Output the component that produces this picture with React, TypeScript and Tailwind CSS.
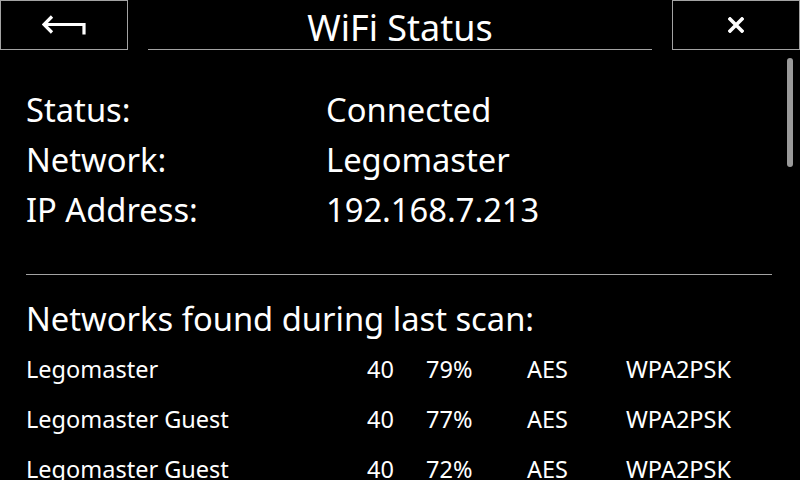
import React from "react";

const rows = [
  ["Legomaster", "40", "79%", "AES", "WPA2PSK"],
  ["Legomaster Guest", "40", "77%", "AES", "WPA2PSK"],
  ["Legomaster Guest", "40", "72%", "AES", "WPA2PSK"],
];

export default function App() {
  return (
    <div
      className="relative w-[800px] h-[480px] overflow-hidden bg-black text-white"
      style={{ fontFamily: '"Noto Sans", "Open Sans", sans-serif' }}
    >
      <div className="flex h-[50px]">
        <div className="w-[128px] h-[50px] border border-[#a3a3a3] flex items-center justify-center">
          <svg width="44" height="20" viewBox="0 0 44 20" fill="none">
            <path d="M10 1.5 L2 9.5 L10 17.5" stroke="white" strokeWidth="3.2" strokeLinejoin="miter" />
            <path d="M2.5 9.5 H42 V19.5" stroke="white" strokeWidth="3.2" />
          </svg>
        </div>
        <div className="flex-1 mx-[20px] h-[50px] border-b border-[#a3a3a3] text-center text-[36px] leading-[50px] pt-[3px]">
          WiFi Status
        </div>
        <div className="w-[128px] h-[50px] border border-[#a3a3a3] flex items-center justify-center">
          <svg width="16" height="16" viewBox="0 0 16 16" fill="none">
            <path d="M2 2 L14 14 M14 2 L2 14" stroke="white" strokeWidth="3.6" strokeLinecap="square" />
          </svg>
        </div>
      </div>

      <div className="pl-[26px] pr-[28px] pt-[35px]">
        <div className="text-[32.7px] leading-[50px]">
          <div className="flex">
            <div className="w-[300px]">Status:</div>
            <div>Connected</div>
          </div>
          <div className="flex">
            <div className="w-[300px]">Network:</div>
            <div>Legomaster</div>
          </div>
          <div className="flex">
            <div className="w-[300px]">IP Address:</div>
            <div>192.168.7.213</div>
          </div>
        </div>
        <div className="mt-[39px] h-px bg-[#a3a3a3]" />
        <div className="mt-[19px] text-[32.7px] leading-[50px]">Networks found during last scan:</div>
        <div className="text-[23.5px] leading-[50px]">
          {rows.map((r, i) => (
            <div key={i} className="grid grid-cols-[341px_59px_101px_99px_1fr]">
              <div>{r[0]}</div>
              <div>{r[1]}</div>
              <div>{r[2]}</div>
              <div>{r[3]}</div>
              <div>{r[4]}</div>
            </div>
          ))}
        </div>
      </div>

      <div className="absolute left-[787px] top-[58px] w-[6px] h-[109px] rounded-full bg-[#9a9a9a]" />
    </div>
  );
}
